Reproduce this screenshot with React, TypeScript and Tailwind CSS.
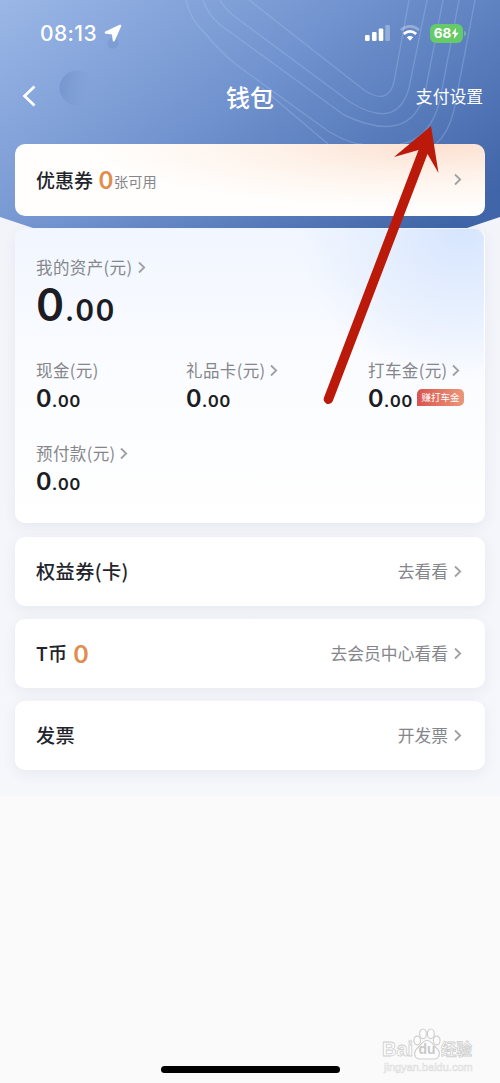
import { ReactNode } from 'react'

interface ArrowProps {
    className?: string
}

interface AmountProps {
    title: string
    arrow?: boolean
    tag?: string
}

interface RowProps {
    title: ReactNode
    text: string
}

const CARD = "rounded-[10px] bg-white shadow-[0_4px_14px_rgba(60,70,100,0.07)]"

function Arrow({ className = "" }: ArrowProps) {
    return (
        <svg className={`shrink-0 ${className}`} width="8" height="13" viewBox="0 0 8 13" fill="none">
            <path d="M1 1.5 6.200 6.500 1 11.500" stroke="#a0a0a2" strokeWidth="1.8" />
        </svg>
    )
}

// 顶部背景
function HeaderBg() {
    return (
        <svg className="absolute left-0 top-0" width="500" height="240" viewBox="0 0 500 240" fill="none">
            <defs>
                <linearGradient id="bg" gradientUnits="userSpaceOnUse" x1="60" y1="-60" x2="340" y2="310">
                    <stop offset="0" stopColor="#9db9e8" />
                    <stop offset="0.5" stopColor="#7092ce" />
                    <stop offset="1" stopColor="#4065a8" />
                </linearGradient>
                <linearGradient id="dot" x1="0" y1="0" x2="1" y2="0.2">
                    <stop offset="0" stopColor="#6484c4" stopOpacity="0.55" />
                    <stop offset="1" stopColor="#7c9bd4" stopOpacity="0" />
                </linearGradient>
            </defs>
            <path d="M0 0H500V217L464 229Q456 232 440 232H60Q44 232 36 229L0 217Z" fill="url(#bg)" />
            <circle cx="77" cy="88" r="17.5" fill="url(#dot)" />
            <circle cx="113" cy="43" r="5.500" fill="#5f82c0" opacity="0.25" />
            <g stroke="#b5d0f5" strokeOpacity="0.26" strokeWidth="1.4">
                <path d="M249 0 364 90Q388 106 394 82L409 0" />
                <path d="M220 0Q224 8 234 16L350 102Q397 131 409 88L427 0" />
                <path d="M203 0Q207 13 219 24L344 115Q410 146 425 93L443 0" />
                <path d="M186 0Q190 19 204 32Q220 52 238 66L328 131Q350 144 362 144M400 144Q430 140 440 100L459 0" />
                <path d="M262 88 328 144M436 144Q449 132 454 110L475 0" />
            </g>
        </svg>
    )
}

function StatusBar() {
    return (
        <div className="flex h-[66px] items-center justify-between pl-10 pr-[34px] font-[Inter,sans-serif] text-white">
            <div className="flex items-center gap-[7px]">
                <span className="pt-px text-[21px] font-medium tracking-[0.4px]">08:13</span>
                <svg width="18" height="18" viewBox="0 0 18 18" fill="#fff" stroke="#fff" strokeWidth="2.2" strokeLinejoin="round">
                    <path d="M16.200 1.800 1.800 8.600 9 9.400 9.800 16.300Z" />
                </svg>
            </div>
            <div className="flex items-center">
                <svg width="26" height="16" viewBox="0 0 26 16" fill="#fff">
                    <rect x="0" y="10" width="4.6" height="6" rx="1.2" />
                    <rect x="7" y="7" width="4.6" height="9" rx="1.2" />
                    <rect x="13.7" y="3.5" width="4.6" height="12.5" rx="1.2" />
                    <rect x="20.3" y="0" width="4.6" height="16" rx="1.2" opacity="0.3" />
                </svg>
                <svg className="ml-[9px]" width="20" height="16" viewBox="0 0 20 16" fill="none" stroke="#fff" strokeWidth="2.8">
                    <path d="M.9 5Q10-2.500 19.100 5" opacity="0.3" />
                    <path d="M3.800 9Q10 3.800 16.200 9" />
                    <path d="M6.800 12.300Q10 9.800 13.200 12.300L10 15.700Z" fill="#fff" stroke="none" />
                </svg>
                <div className="ml-[10px] flex h-[19px] w-[33px] items-center justify-center rounded-[6px] bg-[#65cb68] text-[13.5px] font-bold">
                    68
                    <svg width="8" height="11" viewBox="0 0 8 11" fill="#fff">
                        <path d="M5 0 .6 6H3.4L2.8 11 7.6 4.7H4.6Z" />
                    </svg>
                </div>
                <span className="ml-px h-[5px] w-[2px] rounded-r bg-[#6fb7a2]"></span>
            </div>
        </div>
    )
}

function Amount({ title, arrow, tag }: AmountProps) {
    return (
        <div className="h-[83px]">
            <div className="flex h-6 items-center whitespace-nowrap text-[16.5px] tracking-[0.4px] text-[#85868b]">
                {title}
                {arrow && <Arrow className="ml-[4px]" />}
            </div>
            <div className="flex h-[30px] items-center">
                <div className="w-[46px] whitespace-nowrap pl-[0.5px] font-[Lato,sans-serif] font-bold leading-none text-[#1c1d24]">
                    <span className="text-[25px]">0</span>
                    <span className="ml-[1.5px] text-[17.5px] tracking-[1.5px]">.00</span>
                </div>
                {tag && <div className="ml-[3px] flex h-[17px] w-[47px] items-center justify-center whitespace-nowrap rounded-[5px] rounded-bl-none bg-linear-to-r from-[#d9534f] to-[#e9977a] text-[9.5px] text-white">{tag}</div>}
            </div>
        </div>
    )
}

function Row({ title, text }: RowProps) {
    return (
        <div className={`mb-[12.5px] flex h-[69.5px] items-center justify-between pl-[21px] pr-[23px] ${CARD}`}>
            <div className="flex items-center text-[19.2px] font-medium tracking-[0.4px] text-[#23242b]">{title}</div>
            <div className="flex items-center text-[16.8px] text-[#85868b]">
                {text}
                <Arrow className="ml-[6px]" />
            </div>
        </div>
    )
}

export default function App() {
    return (
        <div className="relative h-[1083px] w-[500px] overflow-hidden bg-[#fafafa] font-['Noto_Sans_CJK_SC',sans-serif]">
            <div className="relative h-[796px] bg-linear-to-b from-[#f2f3fa] to-[#f5f7fb]">
                <HeaderBg />
                <div className="relative">
                    <StatusBar />
                    <div className="grid h-[60px] grid-cols-[1fr_60px_1fr] items-center pl-[22px] pr-[22px] text-white">
                        <svg width="14" height="22" viewBox="0 0 14 22" fill="none">
                            <path d="M12.5 1.5 2.5 11 12.5 20.5" stroke="#fff" strokeWidth="2.7" />
                        </svg>
                        <div className="pt-px text-center text-[24px] font-medium">钱包</div>
                        <div className="-mr-[5px] pt-[2px] text-right text-[16.8px]">支付设置</div>
                    </div>

                    <div className="px-[15px] pt-[18px]">
                        {/* 优惠券 */}
                        <div className="flex h-[71.5px] items-center rounded-[10px] bg-[radial-gradient(ellipse_75%_90%_at_90%_0%,#fce0d0_0%,#fef3eb_50%,#fffefd_100%)] pl-[21px] pr-[23px]">
                            <span className="text-[19px] font-medium text-[#23242b]">优惠券</span>
                            <span className="ml-[6px] w-[15px] font-[Lato,sans-serif] text-[24px] font-bold text-[#e08d4f]">0</span>
                            <span className="pt-[3px] text-[14.2px] text-[#85868b]">张可用</span>
                            <Arrow className="ml-auto" />
                        </div>

                        {/* 我的资产 */}
                        <div className="mt-[12.5px] mb-[13.5px] h-[295px] rounded-[10px] border-t border-r border-t-[#eef4ff] border-r-white bg-[radial-gradient(ellipse_35%_52%_at_95%_0%,#d6e5fe_0%,#e6effe_50%,rgba(246,250,255,0)_100%),linear-gradient(180deg,#f1f6ff_0%,#fbfcff_50%,#ffffff_100%)] pl-[21px] pt-[26px] shadow-[0_4px_14px_rgba(60,70,100,0.07)]">
                            <div className="flex h-6 items-center text-[16.5px] tracking-[0.4px] text-[#85868b]">
                                我的资产(元)
                                <Arrow className="ml-[6px]" />
                            </div>
                            <div className="h-[52px] pl-px font-[Lato,sans-serif] font-bold leading-[51px] text-[#1c1d24]">
                                <span className="text-[45px]">0</span>
                                <span className="ml-[3px] text-[30px] tracking-[2.8px]">.00</span>
                            </div>
                            <div className="mt-[27px] grid grid-cols-[150px_182px_1fr]">
                                <Amount title="现金(元)" />
                                <Amount title="礼品卡(元)" arrow />
                                <Amount title="打车金(元)" arrow tag="赚打车金" />
                                <Amount title="预付款(元)" arrow />
                            </div>
                        </div>

                        <Row title="权益券(卡)" text="去看看" />
                        <Row
                            title={<>T币<span className="ml-[6px] font-[Lato,sans-serif] text-[25px] font-bold leading-none text-[#e08d4f]">0</span></>}
                            text="去会员中心看看"
                        />
                        <Row title="发票" text="开发票" />
                    </div>
                </div>
            </div>

            {/* 红色箭头 */}
            <svg className="absolute left-[315px] top-[121px]" width="130" height="290" viewBox="0 0 130 290">
                <path d="M116 5 123.500 52 112.500 33 17.800 280A4.700 4.700 0 0 1 9 276.500L103.500 29 79 36Z" fill="#bb1a0b" />
            </svg>

            {/* 水印 */}
            <div className="absolute left-[382px] top-[1026px] w-[94px] font-['Liberation_Sans','Noto_Sans_CJK_SC',sans-serif] text-[#fdfdfd]">
                <svg className="absolute left-[31px] top-[2px]" width="28" height="32" viewBox="0 0 28 32" fill="#fdfdfd" stroke="#cfcfcf" strokeWidth="1.2">
                    <ellipse cx="4.200" cy="12.500" rx="3.300" ry="4.300" />
                    <ellipse cx="10" cy="5.800" rx="3.400" ry="4.800" />
                    <ellipse cx="17.800" cy="5.800" rx="3.400" ry="4.800" />
                    <ellipse cx="23.700" cy="12.500" rx="3.300" ry="4.300" />
                    <path d="M14 12.500C9.500 12.500 8 17 4.500 20 0 24 1 31 7 31H21C27 31 28 24 23.500 20 20 17 18.500 12.500 14 12.500Z" />
                </svg>
                <div className="relative flex h-9 items-end text-[20px] font-bold leading-[25px] [-webkit-text-stroke:0.8px_#cfcfcf]">
                    <span className="w-[31px]">Bai</span>
                    <span className="w-[28px] text-center text-[14px] text-[#c9c9c9] [-webkit-text-stroke:0]">du</span>
                    <span className="whitespace-nowrap text-[15.5px]">经验</span>
                </div>
                <div className="pl-[2px] text-[11px] leading-[11px] [-webkit-text-stroke:0.6px_#dedede]">jingyan.baidu.com</div>
            </div>

            <div className="absolute left-[161px] top-[1066px] h-[7px] w-[179px] rounded-full bg-black"></div>
        </div>
    )
}
